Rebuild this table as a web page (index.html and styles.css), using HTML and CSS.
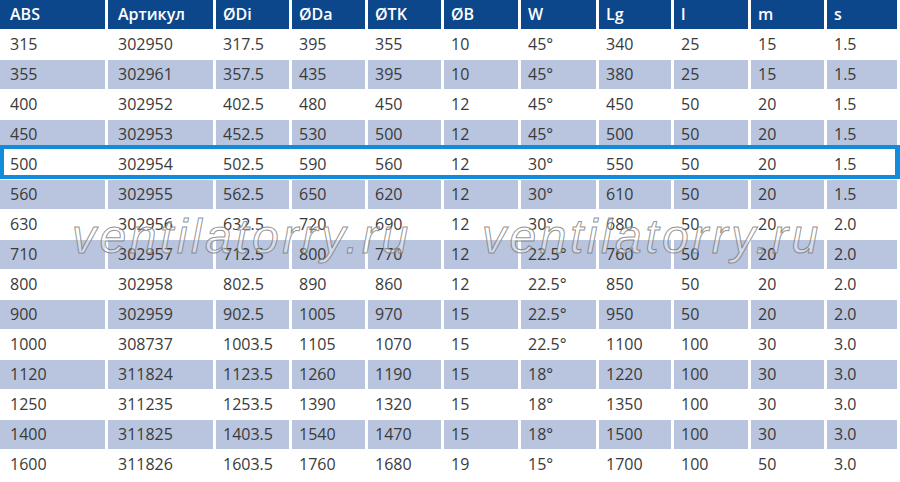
FILE: index.html
```html
<!DOCTYPE html>
<html lang="ru">
<head>
<meta charset="utf-8">
<title>ABS</title>
<link rel="stylesheet" href="styles.css">
</head>
<body>
<div class="sheet">
  <table class="specs">
    <colgroup>
      <col class="c-wide"><col class="c-wide"><col class="c-73"><col class="c-73"><col class="c-73"><col class="c-74"><col class="c-75"><col class="c-72"><col class="c-74"><col class="c-73"><col class="c-70">
    </colgroup>
    <thead>
      <tr><th>ABS</th><th>Артикул</th><th>ØDi</th><th>ØDa</th><th>ØTK</th><th>ØB</th><th>W</th><th>Lg</th><th>l</th><th>m</th><th>s</th></tr>
    </thead>
    <tbody>
      <tr><td>315</td><td>302950</td><td>317.5</td><td>395</td><td>355</td><td>10</td><td>45°</td><td>340</td><td>25</td><td>15</td><td>1.5</td></tr>
      <tr><td>355</td><td>302961</td><td>357.5</td><td>435</td><td>395</td><td>10</td><td>45°</td><td>380</td><td>25</td><td>15</td><td>1.5</td></tr>
      <tr><td>400</td><td>302952</td><td>402.5</td><td>480</td><td>450</td><td>12</td><td>45°</td><td>450</td><td>50</td><td>20</td><td>1.5</td></tr>
      <tr><td>450</td><td>302953</td><td>452.5</td><td>530</td><td>500</td><td>12</td><td>45°</td><td>500</td><td>50</td><td>20</td><td>1.5</td></tr>
      <tr class="selected"><td>500</td><td>302954</td><td>502.5</td><td>590</td><td>560</td><td>12</td><td>30°</td><td>550</td><td>50</td><td>20</td><td>1.5</td></tr>
      <tr><td>560</td><td>302955</td><td>562.5</td><td>650</td><td>620</td><td>12</td><td>30°</td><td>610</td><td>50</td><td>20</td><td>1.5</td></tr>
      <tr><td>630</td><td>302956</td><td>632.5</td><td>720</td><td>690</td><td>12</td><td>30°</td><td>680</td><td>50</td><td>20</td><td>2.0</td></tr>
      <tr><td>710</td><td>302957</td><td>712.5</td><td>800</td><td>770</td><td>12</td><td>22.5°</td><td>760</td><td>50</td><td>20</td><td>2.0</td></tr>
      <tr><td>800</td><td>302958</td><td>802.5</td><td>890</td><td>860</td><td>12</td><td>22.5°</td><td>850</td><td>50</td><td>20</td><td>2.0</td></tr>
      <tr><td>900</td><td>302959</td><td>902.5</td><td>1005</td><td>970</td><td>15</td><td>22.5°</td><td>950</td><td>50</td><td>20</td><td>2.0</td></tr>
      <tr><td>1000</td><td>308737</td><td>1003.5</td><td>1105</td><td>1070</td><td>15</td><td>22.5°</td><td>1100</td><td>100</td><td>30</td><td>3.0</td></tr>
      <tr><td>1120</td><td>311824</td><td>1123.5</td><td>1260</td><td>1190</td><td>15</td><td>18°</td><td>1220</td><td>100</td><td>30</td><td>3.0</td></tr>
      <tr><td>1250</td><td>311235</td><td>1253.5</td><td>1390</td><td>1320</td><td>15</td><td>18°</td><td>1350</td><td>100</td><td>30</td><td>3.0</td></tr>
      <tr><td>1400</td><td>311825</td><td>1403.5</td><td>1540</td><td>1470</td><td>15</td><td>18°</td><td>1500</td><td>100</td><td>30</td><td>3.0</td></tr>
      <tr><td>1600</td><td>311826</td><td>1603.5</td><td>1760</td><td>1680</td><td>19</td><td>15°</td><td>1700</td><td>100</td><td>50</td><td>3.0</td></tr>
    </tbody>
  </table>
  <div class="highlight"></div>
  <div class="watermark wm-left">ventilatorry.ru</div>
  <div class="watermark wm-right">ventilatorry.ru</div>
</div>
</body>
</html>
```

FILE: styles.css
```css
html, body {
  margin: 0;
  padding: 0;
  background: #ffffff;
}

.sheet {
  position: relative;
  width: 900px;
  height: 482px;
  overflow: hidden;
}

.specs {
  border-collapse: separate;
  border-spacing: 3px 1px;
  margin: -1px 0 0 -3px;
  table-layout: fixed;
  width: 903px;
  font-family: "Open Sans", "Noto Sans", sans-serif;
  font-size: 16px;
  color: #3a3a3a;
}

.c-wide { width: 105px; }
.c-70 { width: 70px; }
.c-72 { width: 72px; }
.c-73 { width: 73px; }
.c-74 { width: 74px; }
.c-75 { width: 75px; }

.specs th,
.specs td {
  height: 29px;
  padding: 0 0 0 7px;
  text-align: left;
  vertical-align: middle;
  white-space: nowrap;
  line-height: 29px;
}

.specs th:nth-child(-n+2),
.specs td:nth-child(-n+2) {
  padding-left: 10px;
}

.specs th {
  background: #0d478b;
  color: #ffffff;
  font-weight: 600;
  font-size: 16px;
}

.specs tbody tr:nth-child(even) td {
  background: #b9c5de;
}

.specs tbody tr:nth-child(odd) td {
  background: #ffffff;
}

.highlight {
  position: absolute;
  top: 145px;
  left: 0;
  width: 900px;
  height: 34px;
  box-sizing: border-box;
  border: 4px solid #128bdb;
  border-right-width: 5px;
  pointer-events: none;
}

.watermark {
  position: absolute;
  top: 209px;
  font-family: "Liberation Sans", Arial, sans-serif;
  font-style: italic;
  font-size: 48px;
  line-height: 56px;
  letter-spacing: 3.5px;
  color: rgba(255, 255, 255, 0.4);
  -webkit-text-stroke: 1px rgba(120, 120, 120, 0.8);
  white-space: nowrap;
  pointer-events: none;
}

.wm-left { left: 72px; }
.wm-right { left: 482px; }
```
